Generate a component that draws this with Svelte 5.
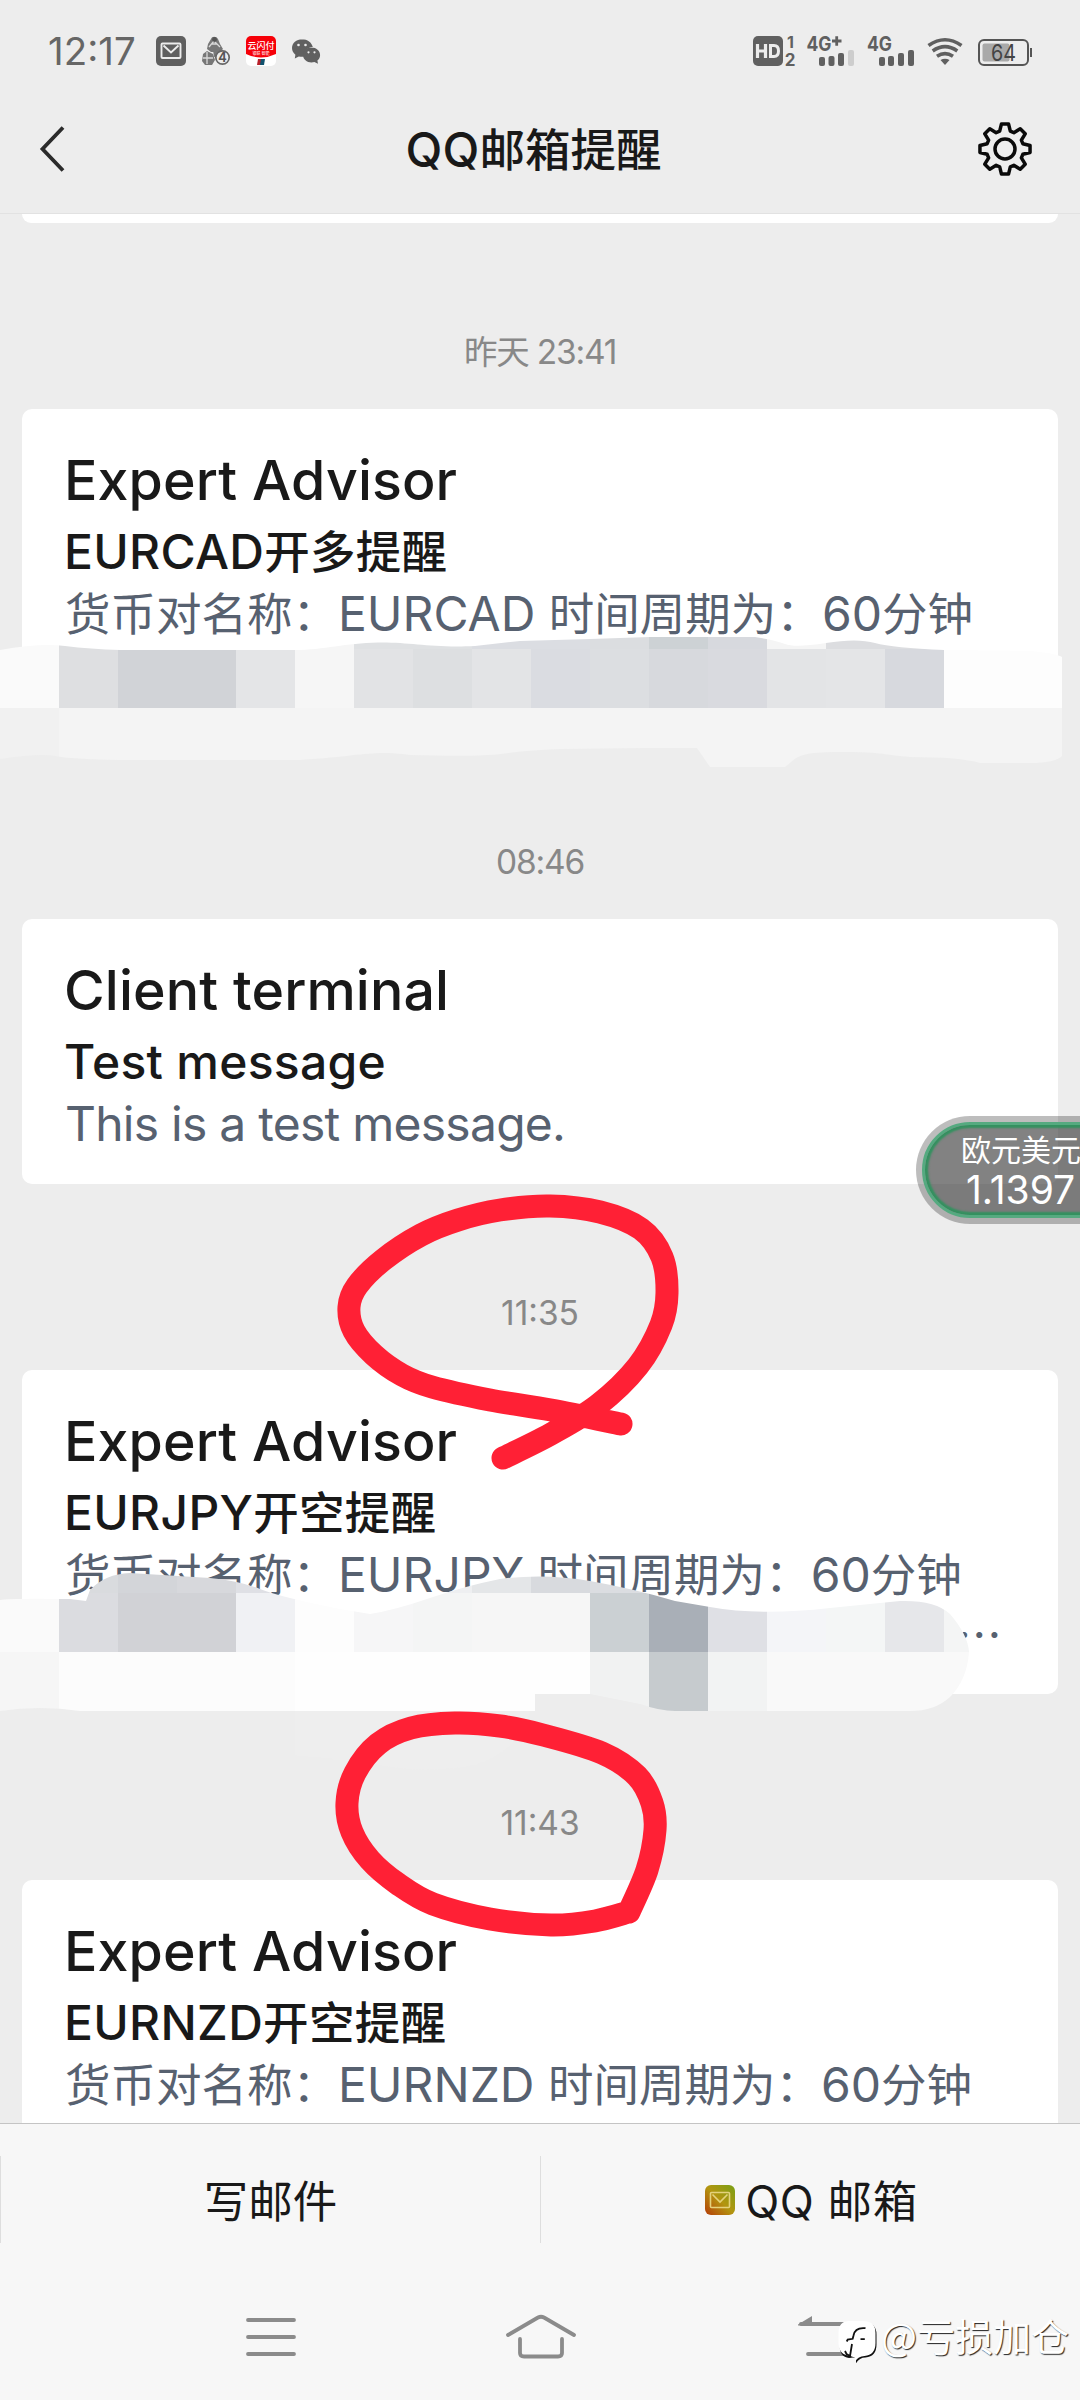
<script>
  const messages = [
    { time: '昨天 23:41', tight: true, title: 'Expert Advisor', subject: 'EURCAD开多提醒', lines: ['货币对名称：EURCAD 时间周期为：60分钟', ''] },
    { time: '08:46', tight: true, title: 'Client terminal', subject: 'Test message', lines: ['This is a test message.'] },
    { time: '11:35', title: 'Expert Advisor', subject: 'EURJPY开空提醒', lines: ['货币对名称：EURJPY 时间周期为：60分钟', ''], more: true },
    { time: '11:43', title: 'Expert Advisor', subject: 'EURNZD开空提醒', lines: ['货币对名称：EURNZD 时间周期为：60分钟', '　　价格为　　　　　　　　　　　　价格'] }
  ];

  // Latin runs are set slightly larger than the Chinese characters around them.
  const runs = (text) =>
    (text.match(/[\x20-\x7e]+|[^\x20-\x7e]+/g) ?? []).map((t) => ({ t, latin: /^[\x20-\x7e]/.test(t) }));

  // Mosaic cells are 59px squares: [column, row top, colour, columns spanned]
  const mosaicA = [
    [0, 590, '#fafafa'], [1, 590, '#dedfe1'], [2, 590, '#f6f6f6', 4], [6, 590, '#dfe1e3', 2], [8, 590, '#dbdde2', 2],
    [10, 590, '#dbdde0'], [11, 590, '#cdd2d5'], [12, 590, '#d7d9de'], [13, 590, '#f5f5f5'], [14, 590, '#dcdde0', 2], [16, 590, '#fdfdfd', 2],
    [0, 649, '#fafafa'], [1, 649, '#dedfe1'], [2, 649, '#d1d3d7', 2], [4, 649, '#e4e5e7'], [5, 649, '#f6f6f6'],
    [6, 649, '#e2e3e5'], [7, 649, '#dddfe1'], [8, 649, '#e3e4e6'], [9, 649, '#dadce1'], [10, 649, '#dcdee1'],
    [11, 649, '#d7d9dd'], [12, 649, '#d9dadf'], [13, 649, '#e3e4e6'], [14, 649, '#e4e5e7'], [15, 649, '#d7d9de'], [16, 649, '#fdfdfd', 2],
    [0, 708, '#f1f1f1'], [1, 708, '#f4f4f4', 17]
  ];
  const mosaicB = [
    [0, 1534, '#fafafa'], [1, 1534, '#d9dbde'], [2, 1534, '#d3d5d9'], [3, 1534, '#d7d8dc'], [4, 1534, '#dfe0e5'], [5, 1534, '#fdfdfd', 2],
    [7, 1534, '#eeeff1'], [8, 1534, '#e4e6e8'], [9, 1534, '#d8dade'], [10, 1534, '#dbdde1', 2],
    [0, 1593, '#fafafa'], [1, 1593, '#dbdce0'], [2, 1593, '#d1d2d6', 2], [4, 1593, '#f0f1f4'], [5, 1593, '#fdfdfd'],
    [6, 1593, '#f6f6f7'], [7, 1593, '#f4f5f5'], [8, 1593, '#f6f6f6', 2], [10, 1593, '#cbd0d3'], [11, 1593, '#a9afb7'],
    [12, 1593, '#dfe0e5'], [13, 1593, '#f4f5f8'], [14, 1593, '#f4f6f6'], [15, 1593, '#e6e7ea'], [16, 1593, '#f4f5f5'],
    [0, 1652, '#f6f6f6'], [1, 1652, '#fcfcfc', 4], [5, 1652, '#fefefe', 5], [10, 1652, '#f1f2f2'], [11, 1652, '#c6cbce'], [12, 1652, '#f2f3f3'], [13, 1652, '#f9f9f9', 4]
  ];

  const gear = Array.from({ length: 8 }, (_, i) => {
    const a = (i * Math.PI) / 4 - Math.PI / 2;
    return [[-0.29, 18.6], [-0.14, 25.3], [0.14, 25.3], [0.29, 18.6]]
      .map(([d, r]) => `${(28 + r * Math.cos(a + d)).toFixed(2)},${(28 + r * Math.sin(a + d)).toFixed(2)}`)
      .join(' ');
  }).join(' ');

  // Smooth curve through hand-drawn stroke points (Catmull-Rom to Bézier).
  const smooth = (pts) => {
    let d = `M${pts[0]}`;
    for (let i = 0; i < pts.length - 1; i++) {
      const [p0, p1, p2, p3] = [pts[i - 1] ?? pts[i], pts[i], pts[i + 1], pts[i + 2] ?? pts[i + 1]];
      d += `C${p1[0] + (p2[0] - p0[0]) / 6} ${p1[1] + (p2[1] - p0[1]) / 6} ${p2[0] - (p3[0] - p1[0]) / 6} ${p2[1] - (p3[1] - p1[1]) / 6} ${p2[0]} ${p2[1]}`;
    }
    return d;
  };
  const strokes = [
    [[503, 1458], [551, 1434], [598, 1405], [638, 1366], [661, 1325], [667, 1293], [662, 1257], [641, 1229], [600, 1212], [550, 1206], [500, 1210], [458, 1220], [421, 1235], [383, 1260], [357, 1286], [349, 1307], [354, 1331], [374, 1355], [402, 1375], [432, 1387], [490, 1400], [551, 1410], [621, 1424]],
    [[629, 1912], [595, 1921], [551, 1925], [490, 1919], [433, 1904], [398, 1884], [370, 1860], [352, 1832], [347, 1803], [355, 1773], [378, 1744], [411, 1728], [455, 1723], [500, 1726], [543, 1735], [602, 1753], [637, 1776], [652, 1803], [655, 1830], [647, 1870], [629, 1912]]
  ];
</script>

{#snippet mixed(text)}{#each runs(text) as run}{#if run.latin}<span class="latin">{run.t}</span>{:else}{run.t}{/if}{/each}{/snippet}

<div class="screen">
  <header>
    <div class="status">
      <span class="clock">12:17</span>
      <svg class="tray" width="166" height="34" viewBox="0 0 166 34">
        <rect x="0" y="2" width="30" height="30" rx="5" fill="#5f5f5f" />
        <rect x="5.500" y="9.500" width="19" height="14.500" rx="1" fill="none" stroke="#ececec" stroke-width="1.900" />
        <path d="M7.500 11.500l7.500 7 7.500-7" fill="none" stroke="#ececec" stroke-width="1.900" />
        <g fill="#777">
          <path d="M52 10l3-5c1-3 5-3 7 0l2 5 3 5-3 3h-9l-4-3z" />
          <path d="M47 20l4-3 6 3 2 6-3 5-7 0-3-4z" />
          <path d="M57 16l5-1 5 2-4 5-5 1z" />
        </g>
        <path d="M53 13l5-6 6 6M47 24h10M51 18v12M56 10h5" stroke="#d9d9d9" stroke-width="1.300" fill="none" />
        <circle cx="58.500" cy="5.500" r="2.400" fill="#555" />
        <circle cx="66.500" cy="23.500" r="6.700" fill="#ececec" stroke="#666" stroke-width="1.700" />
        <text x="66.500" y="28.300" font-size="12.500" font-weight="700" text-anchor="middle" fill="#555">4</text>
        <rect x="90" y="2" width="30" height="30" rx="5" fill="#fff" />
        <path d="M95 2h20a5 5 0 0 1 5 5v13q-15 7-30 0V7a5 5 0 0 1 5-5z" fill="#f60008" />
        <text x="105" y="15" font-size="9" font-weight="500" text-anchor="middle" fill="#fff">云闪付</text>
        <text x="105" y="20.500" font-size="4" text-anchor="middle" fill="#fff">银联 智能</text>
        <path d="M102 25h4l-1 6h-4z" fill="#b8202a" /><path d="M105 25h4l-1 6h-4z" fill="#10526e" />
        <g fill="#606060">
          <path d="M146 5.300c-5.600 0-10 3.900-10 8.800 0 2.700 1.300 5 3.400 6.600l-.6 3.800 4-2.100c2 .5 3.600.5 5 .3 0-6 4-9.200 9-9.600-1-4.500-5.400-7.800-10.800-7.800z" />
          <path d="M155.500 13.600c-4.700 0-8.500 3.300-8.500 7.400s3.800 7.500 8.500 7.500c1 0 2-.2 2.900-.4l3.600 1.700-.6-3.200c1.600-1.300 2.700-3.300 2.700-5.600 0-4.100-3.900-7.400-8.600-7.400z" />
        </g>
        <g fill="#ececec"><circle cx="142.500" cy="11" r="1.300" /><circle cx="149.500" cy="11" r="1.300" /><circle cx="152.500" cy="18.300" r="1.100" /><circle cx="158.500" cy="18.300" r="1.100" /></g>
      </svg>
      <svg class="signals" width="282" height="34" viewBox="0 0 282 34">
        <rect x="0" y="2" width="30" height="30" rx="5" fill="#606060" />
        <path d="M4.500 10v14M12.500 10v14M4.500 17h8" stroke="#ececec" stroke-width="3.200" fill="none" />
        <path d="M17.500 11.500h3.500q4.500 0 4.500 5.500t-4.500 5.500h-3.500z" stroke="#ececec" stroke-width="3" fill="none" />
        <g fill="#606060" font-weight="700">
          <text x="37.500" y="14" text-anchor="middle" font-size="16">1</text>
          <text x="37" y="31.800" text-anchor="middle" font-size="17">2</text>
          <text x="53.500" y="17" font-size="20" textLength="25" lengthAdjust="spacingAndGlyphs">4G</text>
          <path d="M79 7h9.500M83.700 2.300v9.500" stroke="#606060" stroke-width="2.800" />
          <text x="114" y="17" font-size="20" textLength="25" lengthAdjust="spacingAndGlyphs">4G</text>
          <rect x="66" y="23" width="6" height="9" rx="2" /><rect x="75.500" y="22" width="6" height="10" rx="2" />
          <rect x="85" y="19" width="6" height="13" rx="2" /><rect x="95" y="16" width="6" height="16" rx="2" fill="#cdcdcd" />
          <rect x="126" y="23" width="6" height="9" rx="2" /><rect x="135" y="22" width="6" height="10" rx="2" />
          <rect x="145" y="19" width="6" height="13" rx="2" /><rect x="155" y="16" width="6" height="16" rx="2" />
        </g>
        <g fill="none" stroke="#606060" stroke-width="3.600">
          <path d="M175.500 11.500q16.500-11.500 33 0" /><path d="M179.700 17q12.300-8.600 24.600 0" /><path d="M184 22.300q8-5.400 16 0" />
        </g>
        <path d="M187.500 26q4.500-2.600 9 0l-4.500 5z" fill="#606060" />
        <rect x="226" y="6" width="49" height="25" rx="5" fill="none" stroke="#555" stroke-width="2" />
        <rect x="229.500" y="9.500" width="27" height="18" rx="2" fill="#a9a9a9" />
        <path d="M278 14v9" stroke="#555" stroke-width="2" />
        <text x="250.500" y="27" font-size="23" text-anchor="middle" fill="#444" textLength="25" lengthAdjust="spacingAndGlyphs">64</text>
      </svg>
    </div>
    <div class="titlebar">
      <svg width="30" height="50" viewBox="0 0 30 50"><path d="M24 3.500L3.500 25 24 46.500" fill="none" stroke="#2b2b2b" stroke-width="3.800" /></svg>
      <h1>{@render mixed('QQ邮箱提醒')}</h1>
      <svg width="56" height="56" viewBox="0 0 56 56">
        <polygon points={gear} fill="none" stroke="#0a0a0a" stroke-width="3.500" stroke-linejoin="round" />
        <circle cx="28" cy="28" r="10" fill="none" stroke="#0a0a0a" stroke-width="3.500" />
      </svg>
    </div>
  </header>

  <main>
    <div class="card tail"></div>
    {#each messages as m}
      <time class:tight={m.tight}>{m.time}</time>
      <article class="card">
        <h2>{m.title}</h2>
        <h3>{@render mixed(m.subject)}</h3>
        {#each m.lines as line, i}
          <p class:plain={line.startsWith('This')} class:next={i === 1}>{@render mixed(line)}{#if m.more && i === 1}<span class="more">…</span>{/if}</p>
        {/each}
      </article>
    {/each}
  </main>

  <nav class="menu">
    <button>写邮件</button>
    <button>
      <svg width="34" height="34" viewBox="0 0 34 34">
        <defs><linearGradient id="mail" x1="1" y1="0" x2="0" y2="1"><stop offset="0" stop-color="#79a015" /><stop offset=".5" stop-color="#b39510" /><stop offset="1" stop-color="#b53d08" /></linearGradient></defs>
        <rect x="2" y="2" width="30" height="30" rx="6" fill="url(#mail)" />
        <rect x="7.500" y="9.500" width="19" height="15" rx="1" fill="none" stroke="#e4d27c" stroke-width="1.600" />
        <path d="M9.500 11.500l7.500 7.500 7.500-7.500" fill="none" stroke="#e4d27c" stroke-width="1.600" />
      </svg>
      <span class="label">QQ 邮箱</span>
    </button>
  </nav>

  <footer>
    <svg width="52" height="44" viewBox="0 0 52 44"><path d="M3 5h46M3 22h46M3 39h46" stroke="#8b8b8b" stroke-width="3.800" stroke-linecap="round" /></svg>
    <svg width="72" height="48" viewBox="0 0 72 48"><path d="M3 22L33 4.500q3-1.500 6 0L69 22M15 26v14q0 3.500 4 3.500h34q4 0 4-3.500V26" fill="none" stroke="#8b8b8b" stroke-width="3.800" stroke-linecap="round" /></svg>
    <svg width="72" height="44" viewBox="0 0 72 44"><path d="M6 9h42M13 39h35" stroke="#8b8b8b" stroke-width="3.800" stroke-linecap="round" /><path d="M3 9.500L17 1v9.500H3z" fill="#8b8b8b" /></svg>
  </footer>

  <svg class="markup" width="1080" height="2400" viewBox="0 0 1080 2400">
    <defs>
      <clipPath id="smearA"><path d="M0 650Q40 643 65 646T120 650H295C325 650 345 643 378 642.500S430 648 475 646L520 641 590 639 650 637H755Q775 640 785 644T826 643 875 643 944 650L1030 651Q1055 653 1062 657V756Q1055 763 1030 763H980Q960 757 910 757C885 755 885 752 840 752S797 758 785 767H710L697 748H645L560 749Q520 751 500 754T410 755C370 750 365 756 300 760H120Q70 759 55 756T0 759Z" /></clipPath>
      <clipPath id="smearB"><path d="M0 1600Q10 1598 70 1599L86 1601 90 1590Q105 1574 130 1573L210 1578Q240 1581 260 1589T340 1609L370 1614Q395 1610 430 1598T500 1579Q545 1573 590 1581T675 1601L710 1607Q760 1616 830 1608L900 1601Q935 1600 950 1614 968 1635 969 1652 967 1680 950 1697 935 1711 910 1711H675Q660 1711 640 1704L590 1694H535V1711H80Q60 1708 40 1708T0 1711Z" /></clipPath>
    </defs>
    <path d="M295 1711H530Q520 1750 475 1765 420 1775 370 1763L295 1755Z" fill="#eee" />
    <g clip-path="url(#smearA)">{#each mosaicA as [c, y, fill, n]}<rect x={c * 59} {y} width={59 * (n ?? 1)} height="59" {fill} shape-rendering="crispEdges" />{/each}</g>
    <g clip-path="url(#smearB)">{#each mosaicB as [c, y, fill, n]}<rect x={c * 59} {y} width={59 * (n ?? 1)} height="59" {fill} shape-rendering="crispEdges" />{/each}</g>
    <g fill="none" stroke="#ff2035" stroke-width="23" stroke-linecap="round" stroke-linejoin="round">
      {#each strokes as pts}<path d={smooth(pts)} />{/each}
    </g>
  </svg>

  <aside class="quote"><div><span>欧元美元</span><b>1.1397</b></div></aside>

  <div class="watermark">
    <svg width="42" height="48" viewBox="0 0 42 48">
      <path d="M11.500 2.500h14q13 0 13 12v10q0 12-11 13-6 0-9.500 5.800v-5.300l-3-.5-4 .5Q1.500 37 1.500 24.500V14.500q0-12 10-12z" fill="#111" />
      <path d="M11.500 1h13.500q12.500 0 12.500 12v10q0 12-11 13-6.500.5-9 5l-1-3.500-4-1.500Q.500 35 .500 23V13q0-12 11-12z" fill="#fff" />
      <path d="M27.500 8.200q-10.500-1.200-12 7.300l-.8 3.300-5 .7-1 2M22.500 19.200h4.300M14 24l-2 12-3.500-2-1.500-3" fill="none" stroke="#111" stroke-width="1.800" />
    </svg>
    <span>@亏损加仓</span>
  </div>
</div>

<style>
  :global(body) { margin: 0; background: #ededed; }
  .screen {
    position: relative; width: 1080px; height: 2400px; overflow: hidden;
    display: flex; flex-direction: column; background: #ededed; color: #191919;
    font-family: Inter, "Noto Sans CJK SC", sans-serif;
  }
  header { height: 213px; border-bottom: 1px solid #e2e2e2; flex: none; }
  .status { display: flex; align-items: center; height: 102px; padding: 0 45px 0 47px; box-sizing: border-box; }
  .status svg { overflow: visible; }
  .clock { width: 108px; padding-left: 1px; font-size: 38.5px; color: #666; line-height: 40px; }
  .signals { margin-left: auto; }
  .titlebar { display: flex; align-items: center; justify-content: space-between; height: 94px; padding: 0 47px 0 39px; }
  h1 { margin: 3px 0 0 21px; font-size: 45.5px; line-height: 60px; font-weight: 500; }
  main { flex: 1; min-height: 0; overflow: hidden; padding: 0 22px; }
  .card { box-sizing: border-box; background: #fff; border-radius: 10px; padding: 40px 43px 29px; }
  .tail { height: 9px; padding: 0; border-radius: 0 0 10px 10px; }
  time { display: block; box-sizing: border-box; height: 186px; padding-top: 109px; text-align: center; font-size: 33.5px; line-height: 40px; color: #888; }
  .tight { letter-spacing: -1.2px; }
  h2 { margin: 0 0 0 -1px; font-size: 55.5px; line-height: 62px; font-weight: 500; letter-spacing: .1px; }
  h3 { margin: 9px 0 0 -1px; font-size: 45.5px; line-height: 65px; font-weight: 500; letter-spacing: .3px; }
  p { margin: 0; height: 60px; font-size: 45.5px; line-height: 60px; color: #576170; white-space: pre; }
  .next { height: 59px; line-height: 60px; }
  .plain { letter-spacing: -.75px; }
  .latin { font-size: 1.055em; line-height: 0; }
  .more { display: block; text-align: right; margin-right: 13px; line-height: 54px; font-family: "Noto Sans CJK SC", sans-serif; }
  .menu { flex: none; height: 152px; padding-top: 32px; box-sizing: border-box; display: grid; grid-template-columns: 1fr 1fr; border-top: 1px solid #c4c4c4; background: #f7f7f7; }
  .menu button { display: flex; align-items: center; justify-content: center; gap: 8px; height: 87px; border: 0; border-left: 1px solid #dedede; background: none; font: 44.5px/60px Inter, "Noto Sans CJK SC", sans-serif; color: #191919; padding: 4px 0 0; }
  .menu svg { margin-top: -4px; }
  .label { letter-spacing: .6px; }
  footer { flex: none; height: 125px; display: flex; align-items: center; padding: 0 0 2px 245px; background: #f7f7f7; box-sizing: border-box; }
  footer svg:nth-child(2) { margin: 0 218px 0 208px; }
  .markup { position: absolute; left: 0; top: 0; pointer-events: none; }
  .quote { position: absolute; left: 916px; top: 1116px; width: 220px; height: 108px; box-sizing: border-box; padding: 6px; border-radius: 54px; background: rgba(0, 0, 0, .26); }
  .quote div { box-sizing: border-box; height: 96px; padding: 7px 0 0 36px; border: 3px solid #55aa80; border-radius: 48px; background: rgba(72, 72, 72, .5); box-shadow: inset 0 0 2px 3px #33915f; color: #fff; display: flex; flex-direction: column; }
  .quote span { font-size: 30px; line-height: 36px; white-space: nowrap; }
  .quote b { font-size: 39px; line-height: 44px; font-weight: 400; padding-left: 5px; }
  .watermark { position: absolute; left: 838px; top: 2320px; display: flex; align-items: center; font-size: 38px; line-height: 48px; color: #fff; font-family: "Noto Sans CJK SC", sans-serif; white-space: nowrap; }
  .watermark span { margin: -18px 0 0 1px; text-shadow: 1px 1px 1px #222; }
</style>
